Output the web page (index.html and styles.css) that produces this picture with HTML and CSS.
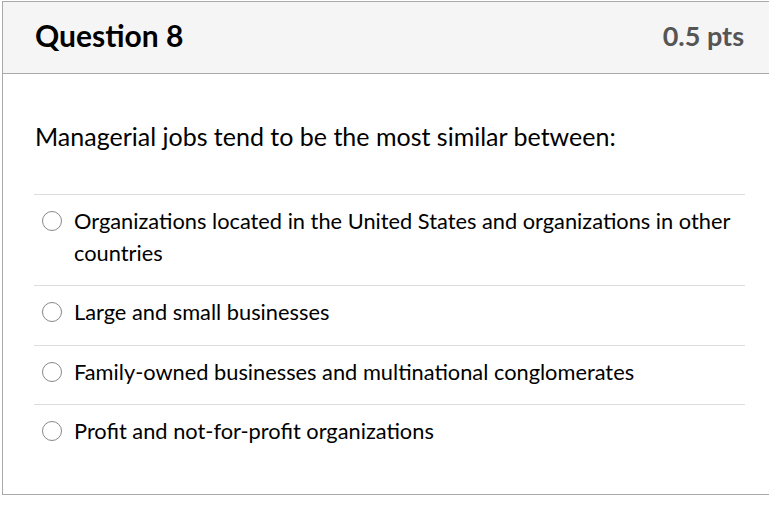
FILE: index.html
```html
<!DOCTYPE html>
<html>
<head>
<meta charset="utf-8">
<link rel="stylesheet" href="styles.css">
</head>
<body>
<div class="card">
  <div class="card-header">
    <h2 class="title">Question 8</h2>
    <span class="pts">0.5 pts</span>
  </div>
  <div class="card-body">
    <p class="question">Managerial jobs tend to be the most similar between:</p>
    <ul class="answers">
      <li class="answer"><span class="radio"></span><span class="label">Organizations located in the United States and organizations in other countries</span></li>
      <li class="answer"><span class="radio"></span><span class="label">Large and small businesses</span></li>
      <li class="answer"><span class="radio"></span><span class="label">Family-owned businesses and multinational conglomerates</span></li>
      <li class="answer"><span class="radio"></span><span class="label">Profit and not-for-profit organizations</span></li>
    </ul>
  </div>
</div>
</body>
</html>
```
FILE: styles.css
```css
html, body {
  margin: 0;
  padding: 0;
  overflow: hidden;
  background: #fff;
}
body {
  padding: 1px 0 0 2px;
  font-family: Lato, "Open Sans", sans-serif;
  color: #000;
}
.card {
  width: 775px;
  box-sizing: border-box;
  border: 1px solid #aaaaaa;
}
.card-header {
  height: 72px;
  box-sizing: border-box;
  background: #f5f5f5;
  border-bottom: 1px solid #aaaaaa;
  display: flex;
  align-items: center;
  justify-content: space-between;
  padding: 0 32px 5px 32px;
}
.title {
  margin: 0;
  font-size: 30px;
  font-weight: 700;
  color: #000;
}
.pts {
  font-size: 27px;
  font-weight: 700;
  color: #555;
}
.card-body {
  padding: 0 31px;
  height: 420px;
}
.question {
  margin: 0;
  padding: 46px 0 0 1px;
  font-size: 25px;
  line-height: 32px;
  height: 121px;
  box-sizing: border-box;
  border-bottom: 1px solid #dddddd;
}
.answers {
  list-style: none;
  margin: 0;
  padding: 0;
}
.answer {
  display: flex;
  align-items: flex-start;
  padding: 10px 0 17px 6px;
  border-bottom: 1px solid #dddddd;
  font-size: 21.8px;
  line-height: 31.5px;
}
.answer:last-child {
  border-bottom: none;
}
.radio {
  flex: none;
  width: 20px;
  height: 20px;
  border: 1px solid #888;
  border-radius: 50%;
  margin: 6px 12px 0 2px;
  box-sizing: border-box;
  background: #fff;
}
.label {
  flex: 1;
}
```
